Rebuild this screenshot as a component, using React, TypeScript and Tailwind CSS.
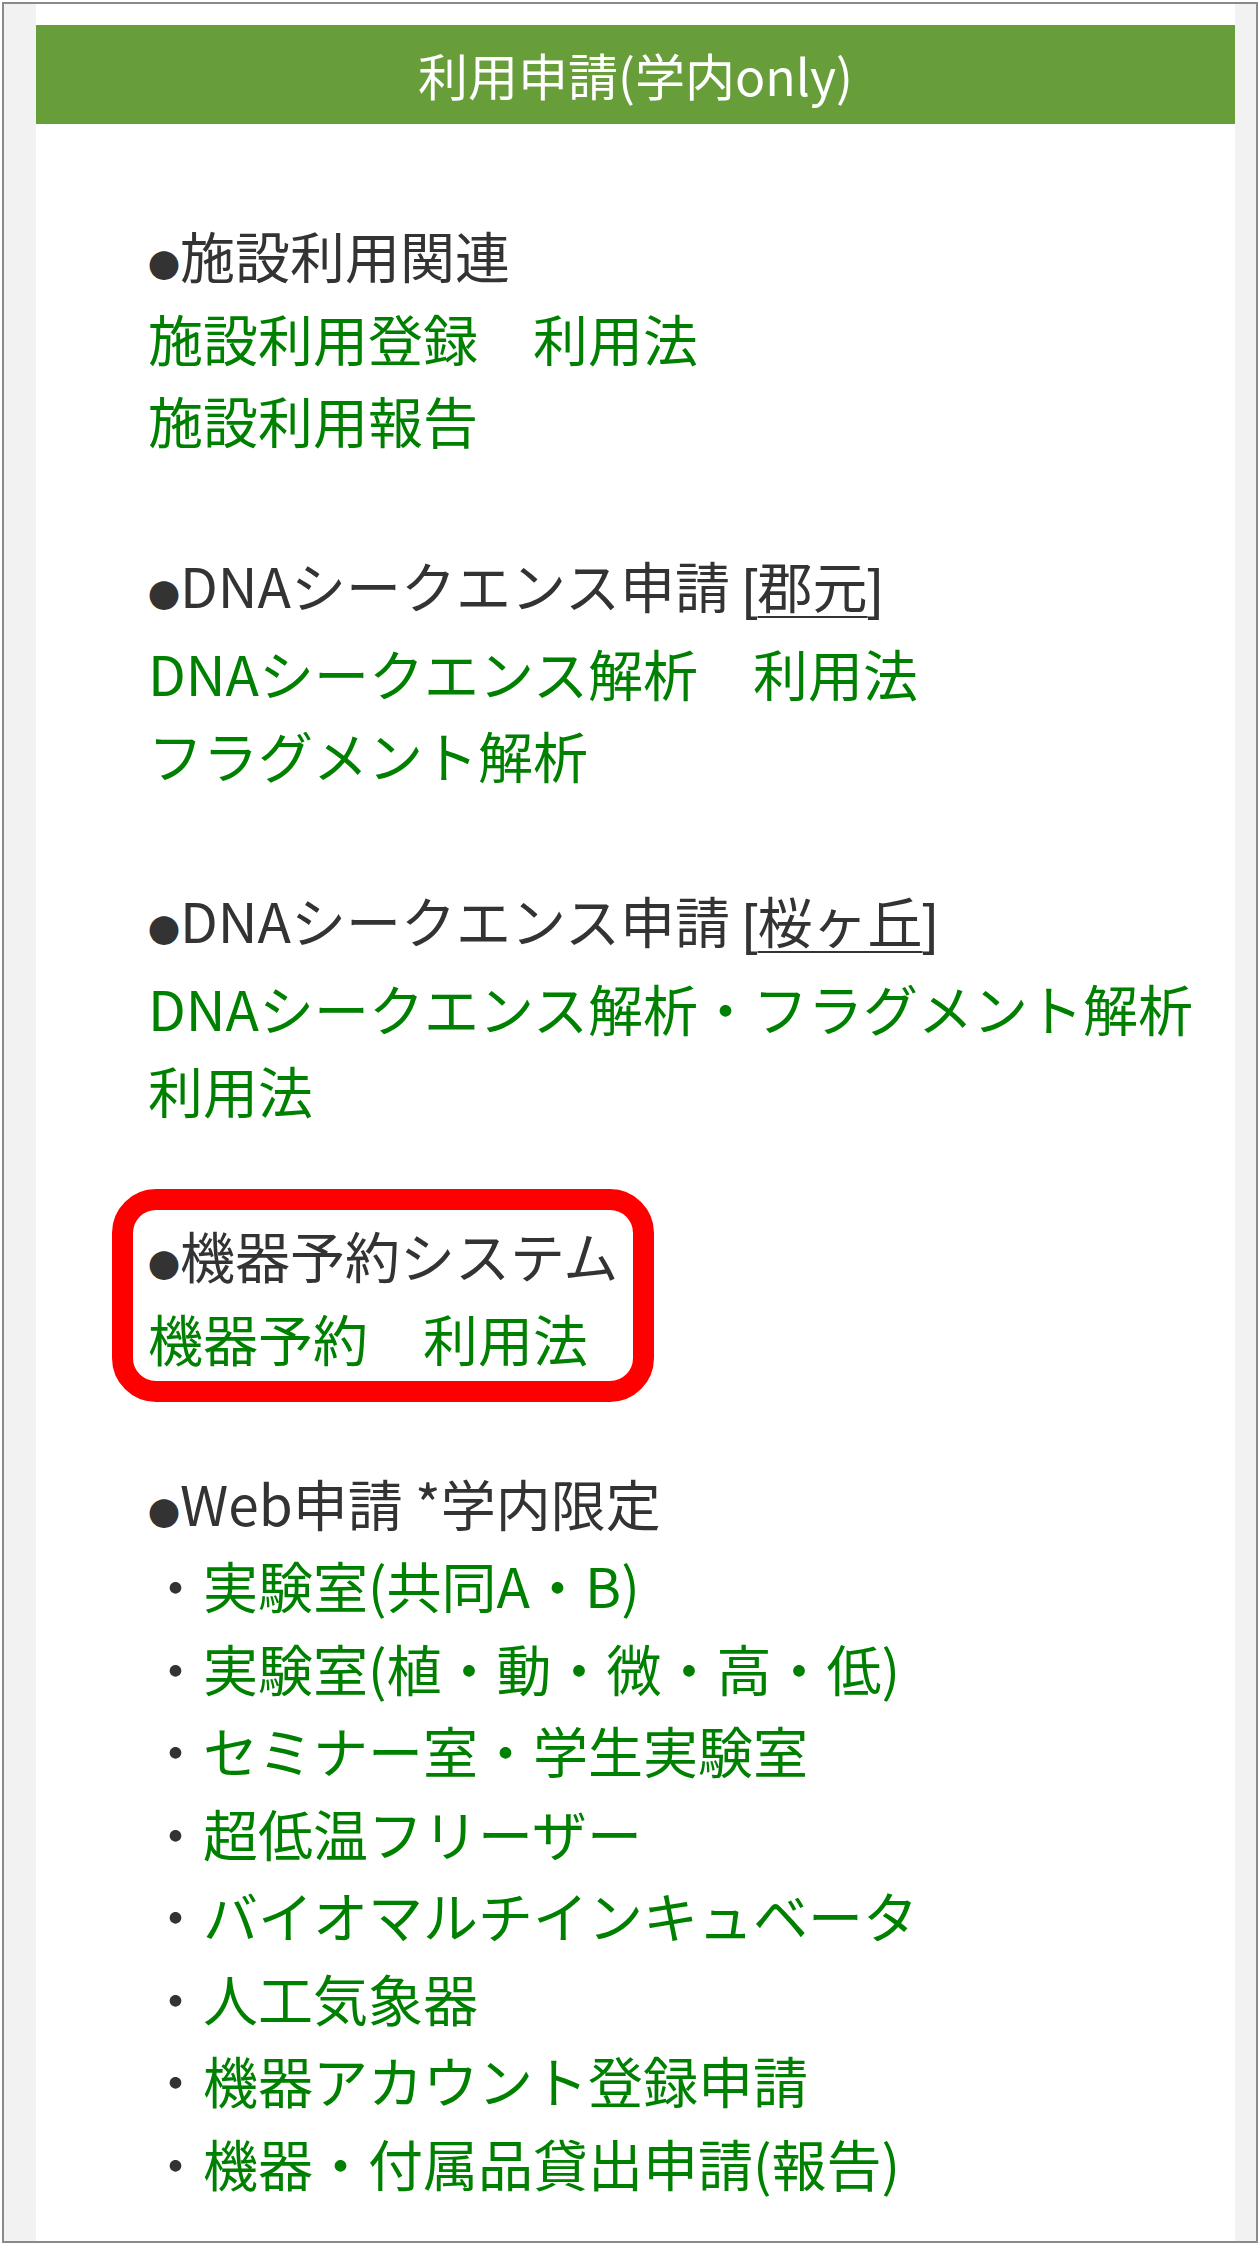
import type { ReactNode } from 'react'

type Group = {
  title: ReactNode
  lines: ReactNode[]
  marked?: boolean
}

function A({ children }: { children: ReactNode }): JSX.Element {
  return (
    <a href="#" className="text-[#008000] no-underline">
      {children}
    </a>
  )
}

function Dot(): JSX.Element {
  return <span className="text-[32px] leading-none">●</span>
}

function Campus({ name }: { name: string }): JSX.Element {
  return (
    <>
      {' '}
      <span className="font-['Liberation_Sans',sans-serif] font-light">[</span>
      <a href="#" className="text-[#333] underline underline-offset-[8px] decoration-[2px]">
        {name}
      </a>
      <span className="font-['Liberation_Sans',sans-serif] font-light">]</span>
    </>
  )
}

const webItems = [
  '実験室(共同A・B)',
  '実験室(植・動・微・高・低)',
  'セミナー室・学生実験室',
  '超低温フリーザー',
  'バイオマルチインキュベータ',
  '人工気象器',
  '機器アカウント登録申請',
  '機器・付属品貸出申請(報告)',
]

const groups: Group[] = [
  {
    title: '施設利用関連',
    lines: [
      <>
        <A>施設利用登録</A>　<A>利用法</A>
      </>,
      <A>施設利用報告</A>,
    ],
  },
  {
    title: (
      <>
        DNAシークエンス申請
        <Campus name="郡元" />
      </>
    ),
    lines: [
      <>
        <A>DNAシークエンス解析</A>　<A>利用法</A>
      </>,
      <A>フラグメント解析</A>,
    ],
  },
  {
    title: (
      <>
        DNAシークエンス申請
        <Campus name="桜ヶ丘" />
      </>
    ),
    lines: [<A>DNAシークエンス解析・フラグメント解析</A>, <A>利用法</A>],
  },
  {
    title: '機器予約システム',
    lines: [
      <>
        <A>機器予約</A>　<A>利用法</A>
      </>,
    ],
    marked: true,
  },
  {
    title: 'Web申請 *学内限定',
    lines: webItems.map((item) => (
      <>
        ・<A>{item}</A>
      </>
    )),
  },
]

function GroupBlock({ group }: { group: Group }): JSX.Element {
  const body = (
    <div>
      <div>
        <Dot />
        {group.title}
      </div>
      {group.lines.map((line, i) => (
        <div key={i}>{line}</div>
      ))}
    </div>
  )

  if (!group.marked) return body

  // red annotation frame drawn around the block, without shifting it
  return (
    <div className="-mx-[36px] -my-[24px] w-fit rounded-[44px] border-[21px] border-[#ff0000] px-[15px] py-[3px]">
      {body}
    </div>
  )
}

export default function App(): JSX.Element {
  return (
    <div className="bg-white p-[2px] font-['Noto_Sans_CJK_JP','Noto_Sans',sans-serif]">
      <div className="h-[2241px] border-2 border-[#8a8a8a] bg-[#f2f2f2] pl-[32px] pr-[21px]">
        <div className="h-full bg-white pt-[21px]">
          <div className="flex h-[99px] items-center justify-center bg-[#689e3a] text-[50px] text-white">
            利用申請(学内only)
          </div>

          <div className="flex flex-col gap-[82.5px] whitespace-nowrap pl-[112px] pt-[89px] text-[55px] leading-[82.5px] text-[#333]">
            {groups.map((group, i) => (
              <GroupBlock key={i} group={group} />
            ))}
          </div>
        </div>
      </div>
    </div>
  )
}
